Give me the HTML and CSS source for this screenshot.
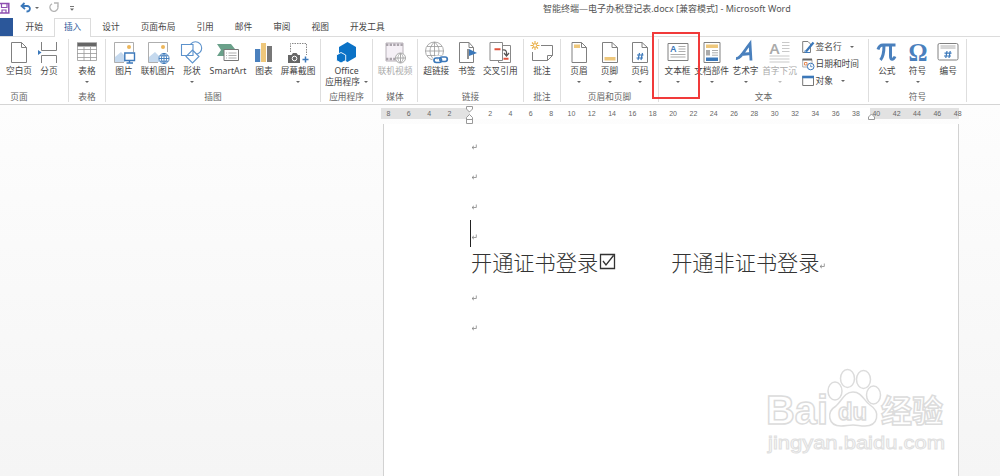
FILE: index.html
```html
<!DOCTYPE html>
<html lang="zh-CN">
<head>
    <meta charset="UTF-8">
    <meta name="viewport" content="width=device-width, initial-scale=1.0">
    <title>智能终端—电子办税登记表.docx - Microsoft Word</title>
    <link rel="stylesheet" href="styles.css">
</head>
<body>

<!-- title bar -->
<header class="titlebar">
    <svg class="quick" width="80" height="16" viewBox="0 0 80 16" fill="none">
        <path d="M0 3.5H8.8V13H0" stroke="#8e4fb0" stroke-width="1.5"/>
        <path d="M1.5 3V7.5H7V4M2 13V10H6V13" stroke="#8e4fb0" stroke-width="1.2"/>
        <path d="M24.5 3L21.5 6L25 9M22 6H27C31 6 31 11.5 26.5 11.5" stroke="#3b78ba" stroke-width="1.8"/>
        <path d="M35 7H39L37 9Z" fill="#666"/>
        <path d="M52 3.8A4 4 0 1 0 57.5 5.5M54 3H58V7" stroke="#b5b5b5" stroke-width="1.4"/>
        <path d="M70 6.5H74" stroke="#777"/>
        <path d="M70 8.5H74L72 10.7Z" fill="#666"/>
    </svg>
    <div class="doc-title">智能终端—电子办税登记表.docx [兼容模式] - Microsoft Word</div>
</header>

<nav class="tabs">
    <span class="file-tab"></span>
    <span class="tab">开始</span>
    <span class="tab active">插入</span>
    <span class="tab">设计</span>
    <span class="tab">页面布局</span>
    <span class="tab">引用</span>
    <span class="tab">邮件</span>
    <span class="tab">审阅</span>
    <span class="tab">视图</span>
    <span class="tab">开发工具</span>
</nav>

<!-- ribbon -->
<section class="ribbon">
    <div class="group g-pages">
        <div class="tools">
            <div class="tool">
                <svg class="icon" viewBox="0 0 24 24"><path class="line" d="M4.5 1.5H14.5L19.5 6.5V21.5H4.5ZM14.5 1.5V6.5H19.5"/></svg>
                <span>空白页</span>
            </div>
            <div class="tool">
                <svg class="icon" viewBox="0 0 24 24"><path class="line" d="M4.5 1V9.5H19.5V1M4.5 22V14.5H19.5V22"/><path d="M1 9L4.5 11.5L1 14Z" fill="#3b78ba"/></svg>
                <span>分页</span>
            </div>
        </div>
        <div class="group-name">页面</div>
    </div>

    <div class="group g-table">
        <div class="tools">
            <div class="tool">
                <svg class="icon" viewBox="0 0 24 24"><path d="M2 1.5H22V5.5H2Z" fill="#666"/><path class="line thin" d="M2.5 2V19.5H21.5V2M2 8.5H22M2 12.5H22M2 16.5H22M9 6V20M15.5 6V20"/></svg>
                <span>表格</span><i class="arrow"></i>
            </div>
        </div>
        <div class="group-name">表格</div>
    </div>

    <div class="group g-illus">
        <div class="tools">
            <div class="tool">
                <svg class="icon" viewBox="0 0 24 24"><path class="line thin" d="M2.5 1.5H21.5V11M12 21.5H2.5V1.5"/><path d="M3 21V16L9 11L13 15V21Z" fill="#c5d9ee"/><circle cx="17" cy="6" r="2" fill="#edb65a"/><path d="M12.8 12H22.5V19.5H12.8ZM14.5 22H21M17.5 19.5V22" fill="#fff" stroke="#3b78ba" stroke-width="1.4"/></svg>
                <span>图片</span>
            </div>
            <div class="tool">
                <svg class="icon" viewBox="0 0 24 24"><path class="line thin" d="M2.5 1.5H21.5V11M12 21.5H2.5V1.5"/><path d="M3 21V16L9 11L13 15V21Z" fill="#c5d9ee"/><circle cx="17" cy="6" r="2" fill="#edb65a"/><circle cx="18" cy="17.5" r="5.3" fill="#fff"/><path d="M18 12.4A5.1 5.1 0 1 0 18 22.6A5.1 5.1 0 1 0 18 12.4V22.6M13 17.5H23M14 14.8H22M14 20.2H22M18 12.4C14.5 15 14.5 20 18 22.6C21.5 20 21.5 15 18 12.4" fill="none" stroke="#3b78ba" stroke-width=".9"/></svg>
                <span>联机图片</span>
            </div>
            <div class="tool">
                <svg class="icon" viewBox="0 0 24 24"><g fill="#fff" stroke="#5c92cc" stroke-width="1.1"><circle cx="15.5" cy="7" r="6.2"/><path d="M1.5 3.5H13V14.5H1.5ZM12.5 9L19 15.5L12.5 22L6 15.5Z"/></g></svg>
                <span>形状</span><i class="arrow"></i>
            </div>
            <div class="tool">
                <svg class="icon" viewBox="0 0 24 24"><path d="M1 3H15L19 8L15 15H1L5 9Z" fill="#6aa18a"/><path d="M8 8.5H22.5V19.5H8Z" fill="#fff" stroke="#777"/><path class="line thin" d="M10 12H11M12.5 12H20.5M10 14.5H11M12.5 14.5H20.5M10 17H11M12.5 17H20.5"/></svg>
                <span>SmartArt</span>
            </div>
            <div class="tool">
                <svg class="icon" viewBox="0 0 24 24"><path d="M3 8H8.2V21H3Z" fill="#4a80bd"/><path d="M9 2H14V21H9Z" fill="#eec77b"/><path d="M15 5H20V21H15Z" fill="#777"/></svg>
                <span>图表</span>
            </div>
            <div class="tool">
                <svg class="icon" viewBox="0 0 24 24"><path d="M4.5 11V2.5H20.5V14" fill="none" stroke="#888" stroke-dasharray="1.5 1"/><path d="M2 14H5.5L7 12H10.5L12 14H14V22H2Z" fill="#666"/><circle cx="8.5" cy="17.5" r="2.3" fill="#666" stroke="#fff"/><path d="M16.5 18.5H22.5M19.5 15.5V21.5" stroke="#3b78ba" stroke-width="1.5"/></svg>
                <span>屏幕截图</span><i class="arrow"></i>
            </div>
        </div>
        <div class="group-name">插图</div>
    </div>

    <div class="group g-apps">
        <div class="tools">
            <div class="tool">
                <svg class="icon" viewBox="0 0 24 24"><path d="M12.5 1L21 6V16L12.5 21L4 16V6Z" fill="#0b72c6"/><path d="M6 11.5L10.7 14V19.5L6 22L1.5 19.5V14Z" fill="#0b72c6" stroke="#fff" stroke-width=".9"/></svg>
                <span>Office</span>
                <span class="second">应用程序<i class="arrow"></i></span>
            </div>
        </div>
        <div class="group-name">应用程序</div>
    </div>

    <div class="group g-media">
        <div class="tools">
            <div class="tool disabled">
                <svg class="icon" viewBox="0 0 24 24"><path d="M3 2H20V20H3Z" fill="#f5f0f6" stroke="#b8b2b9"/><path d="M3 3.8H20M3 18H14" stroke="#aaa4ab" stroke-width="2.4" stroke-dasharray="2.4 1.2"/><circle cx="17.5" cy="17" r="5" fill="#fff" stroke="#aaa"/><path d="M12.5 17H22.5M17.5 12V22M17.5 12C14 15 14 19 17.5 22C21 19 21 15 17.5 12" fill="none" stroke="#aaa"/></svg>
                <span>联机视频</span>
            </div>
        </div>
        <div class="group-name">媒体</div>
    </div>

    <div class="group g-links">
        <div class="tools">
            <div class="tool">
                <svg class="icon" viewBox="0 0 24 24"><path class="line thin" d="M10.5 1A9 9 0 1 0 10.5 19A9 9 0 1 0 10.5 1V19M1.5 10H19.5M3 5.5H18M3 14.5H18M10.5 1C4.5 6 4.5 14 10.5 19C16.5 14 16.5 6 10.5 1"/><g fill="none" stroke="#fff" stroke-width="4"><rect x="10.5" y="16.5" width="7" height="4.5" rx="2.2"/><rect x="16" y="16.5" width="7" height="4.5" rx="2.2"/></g><g fill="none" stroke="#3b78ba" stroke-width="1.7"><rect x="10" y="17" width="7.5" height="4.5" rx="2.2"/><rect x="15.8" y="16" width="7.5" height="4.5" rx="2.2"/></g></svg>
                <span>超链接</span>
            </div>
            <div class="tool">
                <svg class="icon" viewBox="0 0 24 24"><path class="line" d="M4.5 1.5H14L18.5 6.5V21.5H4.5ZM14 1.5V6.5H18.5"/><path d="M13 8V18" stroke="#555" stroke-width="1.3"/><path d="M14 8L22 12L14 15Z" fill="#3b78ba"/></svg>
                <span>书签</span>
            </div>
            <div class="tool">
                <svg class="icon" viewBox="0 0 24 24"><path d="M10.5 4.5H22.5V21.5H10.5Z" fill="#fff" stroke="#888"/><path d="M2 1.5H14.5V19.5H2Z" fill="#fff" stroke="#888"/><path d="M6.5 8.2H12.5M15.5 17.8H20.5" stroke="#e0523c" stroke-width="2"/><path d="M14.5 9C18 8.5 19 10 18.5 14M16 12L18.5 15L21 12" fill="none" stroke="#555" stroke-width="1.2"/></svg>
                <span>交叉引用</span>
            </div>
        </div>
        <div class="group-name">链接</div>
    </div>

    <div class="group g-comment">
        <div class="tools">
            <div class="tool">
                <svg class="icon" viewBox="0 0 24 24"><path class="line" d="M11 4.5H22.5V14.5L17.5 19.5H2.5V11M22.5 14.5H17.5V19.5"/><path d="M5 0V2.5M5 6.5V9M.5 4.5H3M7 4.5H9.5M2 1.5L3.5 3M6.5 6L8 7.5M8 1.5L6.5 3M3.5 6L2 7.5" stroke="#e9ad43" stroke-width="1.1"/><circle cx="5" cy="4.5" r="1.8" fill="none" stroke="#e9ad43"/></svg>
                <span>批注</span>
            </div>
        </div>
        <div class="group-name">批注</div>
    </div>

    <div class="group g-header">
        <div class="tools">
            <div class="tool">
                <svg class="icon" viewBox="0 0 24 24"><path class="line" d="M5 1.5H14.5L19.5 6.5V21.5H5ZM14.5 1.5V6.5H19.5"/><path d="M7 3.5H13V7H7Z" fill="#eec77b"/></svg>
                <span>页眉</span><i class="arrow"></i>
            </div>
            <div class="tool">
                <svg class="icon" viewBox="0 0 24 24"><path class="line" d="M4.5 1.5H14L19.5 6.5V21.5H4.5ZM14 1.5V6.5H19.5"/><path d="M6.5 16H17.5V19.5H6.5Z" fill="#eec77b"/></svg>
                <span>页脚</span><i class="arrow"></i>
            </div>
            <div class="tool">
                <svg class="icon" viewBox="0 0 24 24"><path class="line" d="M4.5 1.5H14L19.5 6.5V21.5H4.5ZM14 1.5V6.5H19.5"/><path d="M11.5 12L10 19M14.5 12L13 19M9 14H15.5M8.5 17H15" stroke="#3b78ba" stroke-width="1.2"/></svg>
                <span>页码</span><i class="arrow"></i>
            </div>
        </div>
        <div class="group-name">页眉和页脚</div>
    </div>

    <div class="group g-text">
        <div class="tools">
            <div class="tool textbox">
                <svg class="icon" viewBox="0 0 24 24"><path class="line" d="M2 2.5H22V19.5H2Z"/><path class="line thin" d="M12.500 5.500H19.500M12.500 8H19.500M12.500 10.500H19.500M4.500 13.500H19.500M4.500 16H19.500"/><text class="letter" x="4.300" y="11.300" font-size="9">A</text></svg>
                <span>文本框</span><i class="arrow"></i>
                <b class="highlight"></b>
            </div>
            <div class="tool">
                <svg class="icon" viewBox="0 0 24 24"><path class="line" d="M4 1.5H20V21.5H4Z"/><path d="M6 3.5H18V7H6Z" fill="#eec77b"/><path d="M6 9H10V14.5H6Z" fill="#aaa"/><path class="line thin" d="M12 9.5H18M12 11.8H18M12 14.2H18"/><path d="M6 16.5H18V20H6Z" fill="#3b78ba"/></svg>
                <span>文档部件</span><i class="arrow"></i>
            </div>
            <div class="tool">
                <svg class="icon" viewBox="0 0 24 24"><path d="M2 17.500C6.500 18 10 10 16 2.500L17 19.500M7 13.500L17 12.500" fill="none" stroke="#4a80bd" stroke-width="2.800"/></svg>
                <span>艺术字</span><i class="arrow"></i>
            </div>
            <div class="tool disabled">
                <svg class="icon" viewBox="0 0 24 24"><text class="letter" x="1.5" y="12.5" font-size="15">A</text><path class="line thin" d="M14 1.5H21.5M14 4.5H21.5M14 7.5H21.5M14 10.5H21.5M1.5 15H21.5M1.5 18H21.5M1.5 21H21.5"/></svg>
                <span>首字下沉</span><i class="arrow"></i>
            </div>
            <div class="small-tools">
                <div class="small-tool">
                    <svg width="13" height="14" viewBox="0 0 13 14"><path class="line" d="M.7 1.5H6L8.5 4V12.5H.7Z"/><path d="M4 11.5L11.5 2.5" stroke="#3b78ba" stroke-width="2.2"/><path d="M3 10.5V12.5H8" fill="none" stroke="#3b78ba"/></svg>
                    <span>签名行</span><i class="arrow"></i>
                </div>
                <div class="small-tool">
                    <svg width="13" height="14" viewBox="0 0 13 14"><path class="line thin" d="M.7 2.5H10V10H.7Z"/><path d="M.5 2.5H10" stroke="#666" stroke-width="2"/><path d="M2.5 5.5H5V8H2.5Z" fill="none" stroke="#e58b56"/><circle cx="8.7" cy="9.5" r="3.3" fill="#fff" stroke="#3b78ba"/><path d="M8.7 7.5V9.7H10.5" fill="none" stroke="#3b78ba" stroke-width=".8"/></svg>
                    <span>日期和时间</span>
                </div>
                <div class="small-tool">
                    <svg width="13" height="14" viewBox="0 0 13 14"><path d="M.7 2.5H11.5V11.5H.7Z" fill="#fff" stroke="#777"/><path d="M.2 3H12" stroke="#3b78ba" stroke-width="2.6"/></svg>
                    <span>对象</span><i class="arrow"></i>
                </div>
            </div>
        </div>
        <div class="group-name">文本</div>
    </div>

    <div class="group g-symbols">
        <div class="tools">
            <div class="tool">
                <svg class="icon" viewBox="0 0 24 24"><path d="M3 8.500C4 5 5.500 4 8 4H20.500M9 4.500C9 11 8 16 5.500 19M15.500 4.500V15C15.500 19.500 18.500 19 20 15.500" fill="none" stroke="#4a80bd" stroke-width="3"/></svg>
                <span>公式</span><i class="arrow"></i>
            </div>
            <div class="tool">
                <svg class="icon" viewBox="0 0 24 24"><text class="glyph" x="2.5" y="19.5" font-size="26" textLength="19" lengthAdjust="spacingAndGlyphs">Ω</text></svg>
                <span>符号</span><i class="arrow"></i>
            </div>
            <div class="tool">
                <svg class="icon" viewBox="0 0 24 24"><rect class="line" x="2" y="2.5" width="20" height="16.5" rx="1.5"/><path class="line thin" d="M4.5 5H19.5M4.5 7H19.5"/><path d="M11 10L9.8 17M14.2 10L13 17M8.5 12.2H15.5M8 15H15" stroke="#3b78ba" stroke-width="1.2"/></svg>
                <span>编号</span>
            </div>
        </div>
        <div class="group-name">符号</div>
    </div>
</section>

<!-- document -->
<main class="workspace">
    <div class="ruler">
        <span>8</span><span>6</span><span>4</span><span>2</span><span></span>
        <span>2</span><span>4</span><span>6</span><span>8</span><span>10</span><span>12</span><span>14</span><span>16</span>
        <span>18</span><span>20</span><span>22</span><span>24</span><span>26</span><span>28</span><span>30</span><span>32</span>
        <span>34</span><span>36</span><span>38</span><span>40</span><span>42</span><span>44</span><span>46</span><span>48</span>
        <svg class="indent-left" width="9" height="20" viewBox="0 0 9 20"><path d="M1.5 .5H7.5V3L4.5 6L1.5 3ZM4.5 8.5L7.5 11.5V17.5H1.5V11.5ZM1.5 13.5H7.5" fill="#fff" stroke="#999"/></svg>
        <svg class="indent-right" width="9" height="9" viewBox="0 0 9 9"><path d="M4.5 1L7.5 4V6.5H1.5V4Z" fill="#fff" stroke="#999"/></svg>
    </div>

    <article class="page">
        <p><svg class="mark" viewBox="0 0 6 6"><path d="M5.3 .5V3.5H1M3 1.8L1 3.5L3 5.2"/></svg></p>
        <p><svg class="mark" viewBox="0 0 6 6"><path d="M5.3 .5V3.5H1M3 1.8L1 3.5L3 5.2"/></svg></p>
        <p><svg class="mark" viewBox="0 0 6 6"><path d="M5.3 .5V3.5H1M3 1.8L1 3.5L3 5.2"/></svg></p>
        <p class="current"><svg class="mark" viewBox="0 0 6 6"><path d="M5.3 .5V3.5H1M3 1.8L1 3.5L3 5.2"/></svg></p>
        <p class="content">
            <span>开通证书登录</span>
            <svg class="check" width="17" height="17" viewBox="0 0 17 17"><path d="M1.5 1.5H15.5V15.5H1.5ZM4 8L7 12L14.5 2.5" fill="none" stroke="#333" stroke-width="1.3"/></svg>
            <span class="other">开通非证书登录</span>
            <svg class="mark" viewBox="0 0 6 6"><path d="M5.3 .5V3.5H1M3 1.8L1 3.5L3 5.2"/></svg>
        </p>
        <p><svg class="mark" viewBox="0 0 6 6"><path d="M5.3 .5V3.5H1M3 1.8L1 3.5L3 5.2"/></svg></p>
        <p><svg class="mark" viewBox="0 0 6 6"><path d="M5.3 .5V3.5H1M3 1.8L1 3.5L3 5.2"/></svg></p>

        <svg class="watermark" width="190" height="96" viewBox="0 0 190 96">
            <text class="wm-bold" x="6" y="60" font-size="41" textLength="62" lengthAdjust="spacingAndGlyphs">Bai</text>
            <g class="wm-shape">
                <ellipse cx="75" cy="27" rx="7" ry="9"/>
                <ellipse cx="87.5" cy="14.5" rx="7" ry="9"/>
                <ellipse cx="103.5" cy="15.5" rx="7" ry="9"/>
                <ellipse cx="113.5" cy="31" rx="7" ry="9"/>
                <path d="M93 28C102 28 104 37 110 41C121 48 118 62 105 62C100 62 97 61 93 61C89 61 85 62 81 62C68 62 66 48 76 42C82 37 84 28 93 28Z"/>
            </g>
            <text class="wm-bold" x="78" y="56" font-size="24" textLength="29" lengthAdjust="spacingAndGlyphs">du</text>
            <text class="wm-cjk" x="121" y="58" font-size="31">经验</text>
            <text class="wm-url" x="8" y="84.5" font-size="19" textLength="177" lengthAdjust="spacingAndGlyphs">jingyan.baidu.com</text>
        </svg>
    </article>
</main>

</body>
</html>
```

FILE: styles.css
```css
* {
    box-sizing: border-box;
}
body {
    margin: 0;
    width: 1000px;
    height: 476px;
    overflow: hidden;
    display: flex;
    flex-direction: column;
    background: #fff;
    color: #444;
    font-family: "Noto Sans", "Noto Sans CJK SC", sans-serif;
    font-size: 8.7px;
    line-height: 12px;
}
svg {
    display: block;
    flex: none;
}

/* title + tabs */
.titlebar {
    height: 18px;
    flex: none;
    display: flex;
}
.quick {
    margin-right: 463px;
}
.doc-title {
    font-size: 9.03px;
    line-height: 17px;
    white-space: nowrap;
    color: #555;
}
.tabs {
    height: 19px;
    flex: none;
    display: flex;
    border-bottom: 1px solid #dcdcdc;
}
.file-tab {
    width: 13px;
    height: 18px;
    margin-right: 2px;
    background: #2b579a;
}
.tab {
    height: 19px;
    padding: 0 10.5px;
    line-height: 18px;
}
.tab.active {
    margin: 0 .5px;
    padding: 0 9px;
    border: 1px solid #dcdcdc;
    border-bottom: 0;
    background: #fff;
    color: #2b579a;
    line-height: 17px;
}

/* ribbon */
.ribbon {
    height: 68px;
    flex: none;
    display: flex;
    padding-top: 2px;
    border-bottom: 1px solid #d5d5d5;
}
.group {
    height: 63px;
    flex: none;
    display: flex;
    flex-direction: column;
    border-right: 1px solid #dedede;
}
.tools {
    height: 52px;
    flex: none;
    display: flex;
    justify-content: center;
}
.group-name {
    text-align: center;
    color: #666;
    line-height: 12px;
}
.tool {
    width: 34px;
    flex: none;
    display: flex;
    flex-direction: column;
    align-items: center;
    padding-top: 2px;
    white-space: nowrap;
}
.icon {
    width: 24px;
    height: 24px;
    overflow: visible;
}
.tool > .arrow {
    margin-top: 4px;
}
.arrow {
    flex: none;
    border: 2px solid transparent;
    border-top: 2.5px solid #666;
    border-bottom: 0;
}
.second {
    display: flex;
    align-items: center;
    gap: 4px;
    margin-top: -1px;
}
.disabled {
    color: #aaa;
}
.disabled .arrow {
    border-top-color: #bbb;
}
.line {
    fill: #fff;
    stroke: #808080;
    stroke-width: 1;
}
.thin {
    fill: none;
    stroke: #999;
    stroke-width: .8;
}
.letter {
    font-family: "Noto Sans", sans-serif;
    font-weight: 600;
    fill: #3b78ba;
}
.glyph {
    font-family: "Liberation Serif", serif;
    font-weight: 700;
    fill: #4a80bd;
}
.disabled .letter {
    fill: #aaa;
}
.disabled .thin {
    stroke: #bbb;
}
.g-pages { width: 69px; }
.g-pages .tool { width: 30px; }
.g-pages .group-name { padding-right: 30px; }
.g-table { width: 37px; }
.g-illus { width: 215px; }
.g-illus .tools { padding-right: 4px; }
.g-illus .tool:nth-child(4) { width: 38px; }
.g-apps { width: 52px; }
.g-media { width: 45px; }
.g-links { width: 106px; }
.g-links .tools { padding-right: 1.5px; }
.g-links .tool:nth-child(2) { width: 27px; }
.g-links .tool:nth-child(3) { width: 40px; }
.g-comment { width: 37px; }
.g-header { width: 98px; }
.g-header .tool { width: 30.5px; }
.g-text { width: 210px; }
.g-text .tools { padding-right: 3px; }
.g-symbols { width: 98px; }
.g-symbols .tool { width: 30.7px; }
.textbox {
    position: relative;
}
.highlight {
    position: absolute;
    left: -8.5px;
    top: -7px;
    width: 48px;
    height: 67px;
    border: 2px solid #f13a3a;
}
.small-tools {
    width: 67px;
    padding-left: 5px;
}
.small-tool {
    height: 16.7px;
    display: flex;
    align-items: center;
    white-space: nowrap;
}
.small-tool span {
    margin-left: 1px;
}
.small-tool .arrow {
    margin-left: 8px;
}

/* document area */
.workspace {
    flex: 1;
    display: flex;
    flex-direction: column;
    padding: 3px 0 0 378.3px;
    background: linear-gradient(#fdfdfd, #f5f5f5);
}
.ruler {
    position: relative;
    width: 590px;
    height: 11px;
    flex: none;
    display: flex;
    color: #666;
    font: 7px/11px "Liberation Sans", sans-serif;
    background: linear-gradient(90deg, transparent 3px, #e2e2e2 3px 92px, #fff 92px 492.5px, #e2e2e2 492.5px 581px, transparent 581px);
}
.ruler span {
    width: 20.34px;
    flex: none;
    text-align: center;
}
.indent-left {
    position: absolute;
    left: 87px;
    top: -2px;
}
.indent-right {
    position: absolute;
    left: 489px;
    top: 5px;
}
.page {
    position: relative;
    width: 576px;
    flex: 1;
    margin: 5px 0 0 4.7px;
    padding: 8px 0 0 87px;
    border: solid #d2d2d2;
    border-width: 0 1px;
    background: #fff;
}
.page p {
    height: 30.1px;
    margin: 0;
    display: flex;
    align-items: center;
}
.mark {
    width: 6px;
    height: 6px;
    fill: none;
    stroke: #888;
    stroke-width: .8;
}
.page .current {
    position: relative;
}
.current::before {
    content: "";
    position: absolute;
    left: -1px;
    top: -2px;
    width: 1px;
    height: 27px;
    background: #222;
}
.page .content {
    padding-bottom: 11px;
    color: #333;
    font: 300 21.2px/30px "Noto Sans CJK SC", sans-serif;
    white-space: nowrap;
}
.content .check {
    margin-left: 1px;
}
.content .other {
    margin-left: 55px;
}
.content .mark {
    margin-top: 9px;
}

.watermark {
    position: absolute;
    left: 376px;
    top: 240px;
    fill: #fff;
    stroke: #dcdcdc;
    stroke-width: 1.5;
}
.wm-bold {
    font-family: "Liberation Sans", sans-serif;
    font-weight: 700;
}
.wm-cjk {
    font-family: "Noto Sans CJK SC", sans-serif;
    font-weight: 700;
}
.wm-url {
    font-family: "Liberation Sans", sans-serif;
    font-weight: 400;
    stroke-width: 1;
    stroke: #e0e0e0;
}
```
